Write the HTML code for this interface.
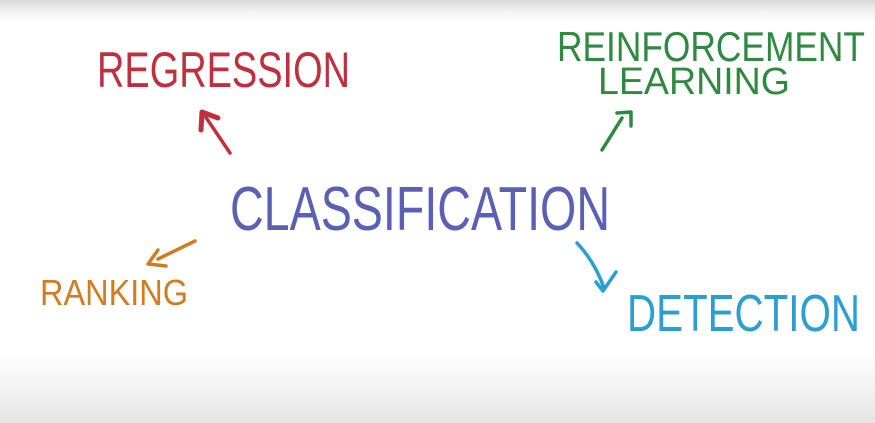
<!DOCTYPE html>
<html><head><meta charset="utf-8"><style>
html,body{margin:0;padding:0;width:875px;height:423px;overflow:hidden;background:#fff}
.bg{position:absolute;left:0;top:0;width:875px;height:423px;background:linear-gradient(to bottom,#d9d9d9 0px,#f3f3f3 12px,#fff 24px,#fff 350px,#f4f4f4 385px,#e4e4e4 423px)}
svg{position:absolute;left:0;top:0}
text{font-family:"Liberation Sans",sans-serif}
</style></head><body>
<div class="bg"></div>
<svg width="875" height="423" viewBox="0 0 875 423">
<g fill="none" stroke-linecap="round" stroke-linejoin="round" stroke-width="3.5">
<path d="M230 153 L203 113" stroke="#c0303c"/>
<path d="M201 130 L202 112 L218 118" stroke="#c0303c" stroke-width="5"/>
<path d="M602 150 L622 118" stroke="#2e8a40"/>
<path d="M617 113 L631 112 L631 126" stroke="#2e8a40"/>
<path d="M195 241 L158 259" stroke="#d27c22"/>
<path d="M158 250 L148 264 L166 266" stroke="#d27c22"/>
<path d="M577 243 Q595 262 604 288" stroke="#2b9fd2"/>
<path d="M596 282 L603 291 L616 272" stroke="#2b9fd2"/>
</g>
<text x="97" y="87" font-size="50" fill="#c0303c" textLength="253" lengthAdjust="spacingAndGlyphs">REGRESSION</text>
<text x="557" y="61" font-size="42" fill="#2e8a40" textLength="308" lengthAdjust="spacingAndGlyphs">REINFORCEMENT</text>
<text x="598" y="94" font-size="38" fill="#2e8a40" textLength="192" lengthAdjust="spacingAndGlyphs">LEARNING</text>
<text x="230" y="230" font-size="62" fill="#5a60b4" textLength="380" lengthAdjust="spacingAndGlyphs">CLASSIFICATION</text>
<text x="40" y="305" font-size="36" fill="#d27c22" textLength="148" lengthAdjust="spacingAndGlyphs">RANKING</text>
<text x="627" y="331" font-size="52" fill="#2b9fd2" textLength="233" lengthAdjust="spacingAndGlyphs">DETECTION</text>
</svg>
</body></html>
